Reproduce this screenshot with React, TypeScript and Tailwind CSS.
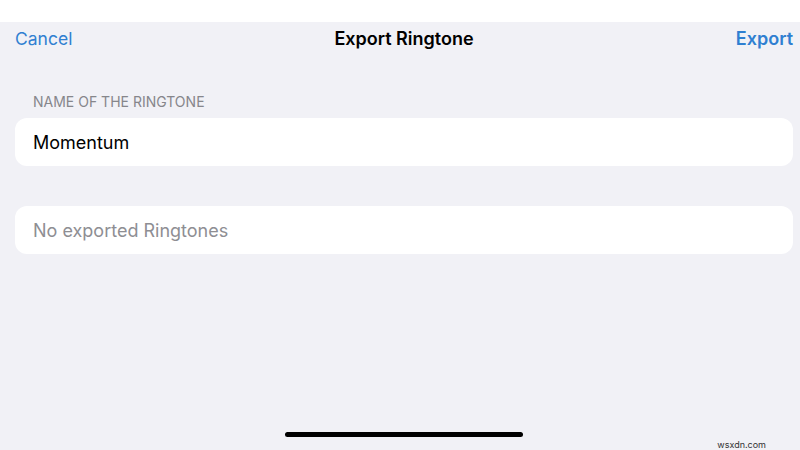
import React from 'react';

export default function App() {
  return (
    <div
      className="w-[800px] h-[450px] bg-white flex flex-col overflow-hidden"
      style={{ fontFamily: 'Inter, "Noto Sans", sans-serif' }}
    >
      <div className="h-[22px] bg-white" />
      <div className="flex-1 bg-[#f1f1f6] flex flex-col relative">
        {/* Nav bar */}
        <div className="h-[34px] pl-[15px] pr-[7px] flex items-center justify-between relative">
          <span className="text-[17.5px] text-[#2f7fd1] leading-none">Cancel</span>
          <span className="absolute left-1/2 -translate-x-1/2 text-[18px] font-semibold text-black leading-none pl-[8px]">
            Export Ringtone
          </span>
          <span className="text-[18px] font-semibold text-[#2f7fd1] leading-none">Export</span>
        </div>

        <div className="px-[15px] pt-[39px] flex flex-col">
          <div className="pl-[18px] text-[14px] text-[#86868b] leading-none mb-[9px]">
            NAME OF THE RINGTONE
          </div>
          <div className="w-[778px] h-[48px] bg-white rounded-[12px] flex items-center pl-[18px] text-[18px] text-black">
            Momentum
          </div>
          <div className="w-[778px] h-[48px] mt-[40px] bg-white rounded-[12px] flex items-center pl-[18px] text-[18px] text-[#8e8e93]">
            No exported Ringtones
          </div>
        </div>

        <div className="mt-auto h-[18px] flex justify-center relative">
          <div className="w-[238px] h-[5px] rounded-full bg-black ml-[8px]" />
          <span className="absolute right-[34px] bottom-[1px] text-[9px] text-[#333] leading-none">
            wsxdn.com
          </span>
        </div>
      </div>
    </div>
  );
}
